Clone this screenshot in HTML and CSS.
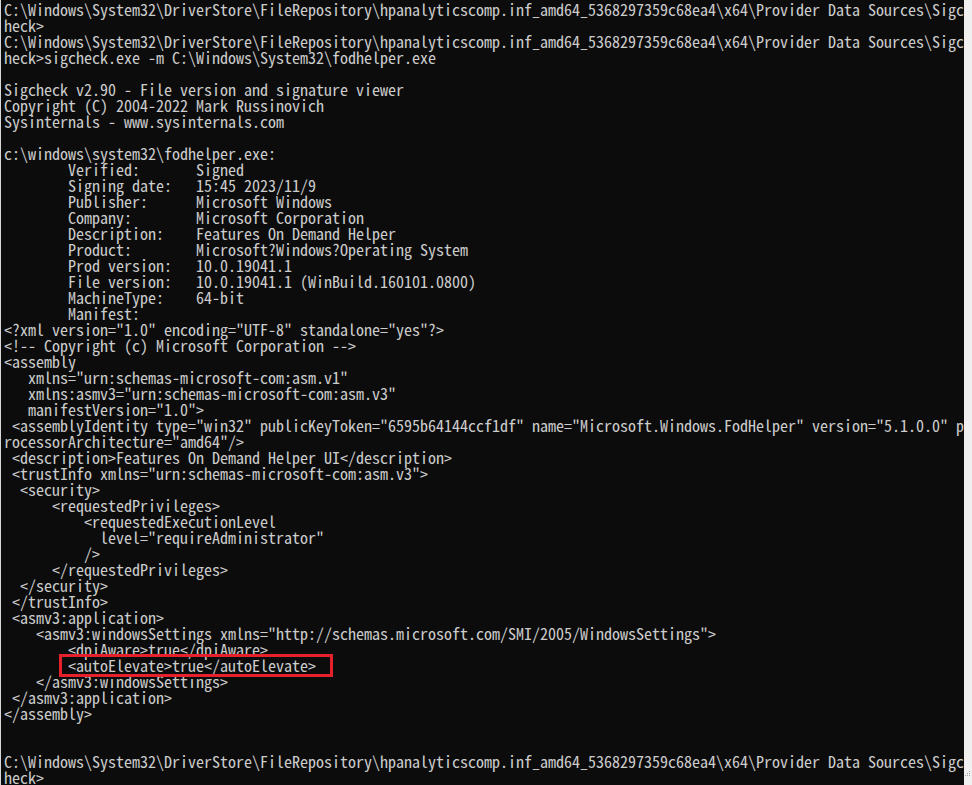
FILE: index.html
```html
<!DOCTYPE html>
<html>
<head>
<meta charset="utf-8">
<title>Command Prompt</title>
<link rel="stylesheet" href="styles.css">
</head>
<body>
<div class="window">
<div class="console"><pre class="screen">C:\Windows\System32\DriverStore\FileRepository\hpanalyticscomp.inf_amd64_5368297359c68ea4\x64\Provider Data Sources\Sigc
heck&gt;
C:\Windows\System32\DriverStore\FileRepository\hpanalyticscomp.inf_amd64_5368297359c68ea4\x64\Provider Data Sources\Sigc
heck&gt;sigcheck.exe -m C:\Windows\System32\fodhelper.exe

Sigcheck v2.90 - File version and signature viewer
Copyright (C) 2004-2022 Mark Russinovich
Sysinternals - www.sysinternals.com

c:\windows\system32\fodhelper.exe:
        Verified:       Signed
        Signing date:   15:45 2023/11/9
        Publisher:      Microsoft Windows
        Company:        Microsoft Corporation
        Description:    Features On Demand Helper
        Product:        Microsoft?Windows?Operating System
        Prod version:   10.0.19041.1
        File version:   10.0.19041.1 (WinBuild.160101.0800)
        MachineType:    64-bit
        Manifest:
&lt;?xml version="1.0" encoding="UTF-8" standalone="yes"?&gt;
&lt;!-- Copyright (c) Microsoft Corporation --&gt;
&lt;assembly
   xmlns="urn:schemas-microsoft-com:asm.v1"
   xmlns:asmv3="urn:schemas-microsoft-com:asm.v3"
   manifestVersion="1.0"&gt;
 &lt;assemblyIdentity type="win32" publicKeyToken="6595b64144ccf1df" name="Microsoft.Windows.FodHelper" version="5.1.0.0" p
rocessorArchitecture="amd64"/&gt;
 &lt;description&gt;Features On Demand Helper UI&lt;/description&gt;
 &lt;trustInfo xmlns="urn:schemas-microsoft-com:asm.v3"&gt;
  &lt;security&gt;
      &lt;requestedPrivileges&gt;
          &lt;requestedExecutionLevel
            level="requireAdministrator"
          /&gt;
      &lt;/requestedPrivileges&gt;
  &lt;/security&gt;
 &lt;/trustInfo&gt;
 &lt;asmv3:application&gt;
    &lt;asmv3:windowsSettings xmlns="http://schemas.microsoft.com/SMI/2005/WindowsSettings"&gt;
        &lt;dpiAware&gt;true&lt;/dpiAware&gt;
        <span class="mark">&lt;autoElevate&gt;true&lt;/autoElevate&gt;</span>
    &lt;/asmv3:windowsSettings&gt;
 &lt;/asmv3:application&gt;
&lt;/assembly&gt;


C:\Windows\System32\DriverStore\FileRepository\hpanalyticscomp.inf_amd64_5368297359c68ea4\x64\Provider Data Sources\Sigc
heck&gt;</pre></div>
<div class="scrollbar"><svg class="grip" width="6" height="6" viewBox="0 0 6 6"><rect x="4" y="0" width="1" height="1" fill="#a0a0a0"/><rect x="2" y="2" width="1" height="1" fill="#a0a0a0"/><rect x="4" y="2" width="1" height="1" fill="#a0a0a0"/><rect x="0" y="4" width="1" height="1" fill="#a0a0a0"/><rect x="2" y="4" width="1" height="1" fill="#a0a0a0"/><rect x="4" y="4" width="1" height="1" fill="#a0a0a0"/></svg></div>
</div>
</body>
</html>
```

FILE: styles.css
```css
html, body {
  margin: 0;
  padding: 0;
  height: 100%;
  background: #0c0c0c;
  overflow: hidden;
}

.window {
  display: flex;
  height: 785px;
  width: 972px;
  border-left: 1px solid #d8d8d8;
  box-sizing: border-box;
}

.console {
  flex: 1;
  min-width: 0;
  padding: 1px 0 0 3px;
  overflow: hidden;
}

.screen {
  margin: 0;
  font-family: "Noto Sans Mono CJK SC", "DejaVu Sans Mono", monospace;
  font-size: 16px;
  line-height: 16px;
  color: #cccccc;
  white-space: pre;
}

.mark {
  position: relative;
  display: inline-block;
  height: 16px;
  vertical-align: top;
}

.mark::after {
  content: "";
  position: absolute;
  top: -3px;
  left: -9px;
  right: -17px;
  bottom: -4px;
  border: 3px solid #e6212b;
}

.scrollbar {
  position: relative;
  width: 8px;
  background: #f0f0f0;
  flex: none;
}

.grip {
  position: absolute;
  right: 1px;
  bottom: 8px;
}
```
